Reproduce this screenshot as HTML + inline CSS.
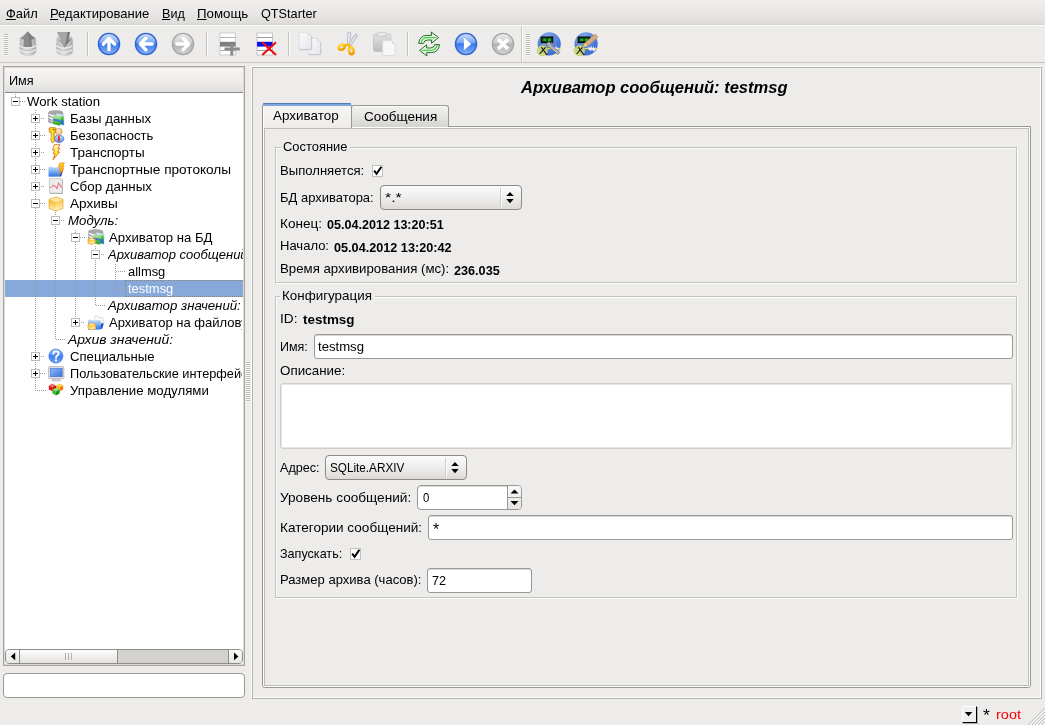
<!DOCTYPE html>
<html lang="ru"><head><meta charset="utf-8"><title>OpenSCADA</title>
<style>
html,body{margin:0;padding:0}
body{width:1045px;height:725px;overflow:hidden;position:relative;background:#edeceb;font-family:"Liberation Sans",sans-serif;font-size:13px;color:#000}
.a{position:absolute;box-sizing:border-box}
.t{position:absolute;white-space:pre;line-height:20px;height:20px;will-change:transform}
.t span{display:inline-block;transform-origin:0 50%}
.t u{text-decoration:underline;text-underline-offset:1px}
svg{position:absolute;overflow:visible}

</style></head>
<body>
<div class="a " style="left:0px;top:0px;width:1045px;height:25px;background:linear-gradient(#f0efee,#eceae9 40%,#e0dedc 90%,#d6d4d1)"></div>
<div class="a " style="left:0px;top:25px;width:1045px;height:1px;background:#fdfdfc"></div>
<div class="a " style="left:0px;top:62px;width:1045px;height:1px;background:#c8c6c3"></div>
<div class="a " style="left:4px;top:34px;width:4px;height:22px;background:repeating-linear-gradient(#b9b7b4 0,#b9b7b4 1px,#fdfdfd 1px,#fdfdfd 2px)"></div>
<div class="a " style="left:87px;top:32px;width:1px;height:24px;background:#c4c2bf"></div>
<div class="a " style="left:88px;top:32px;width:1px;height:24px;background:#fbfbfa"></div>
<div class="a " style="left:206px;top:32px;width:1px;height:24px;background:#c4c2bf"></div>
<div class="a " style="left:207px;top:32px;width:1px;height:24px;background:#fbfbfa"></div>
<div class="a " style="left:288px;top:32px;width:1px;height:24px;background:#c4c2bf"></div>
<div class="a " style="left:289px;top:32px;width:1px;height:24px;background:#fbfbfa"></div>
<div class="a " style="left:407px;top:32px;width:1px;height:24px;background:#c4c2bf"></div>
<div class="a " style="left:408px;top:32px;width:1px;height:24px;background:#fbfbfa"></div>
<div class="a " style="left:521px;top:26px;width:1px;height:36px;background:#cbc9c6"></div>
<div class="a " style="left:522px;top:26px;width:1px;height:36px;background:#fdfdfc"></div>
<div class="a " style="left:526px;top:34px;width:4px;height:22px;background:repeating-linear-gradient(#b9b7b4 0,#b9b7b4 1px,#fdfdfd 1px,#fdfdfd 2px)"></div>
<svg style="left:0;top:0" width="1045" height="70" viewBox="0 0 1045 70">
<defs>
<linearGradient id="gcyl" x1="0" x2="1" y1="0" y2="0"><stop offset="0" stop-color="#b9b9b9"/><stop offset=".45" stop-color="#e2e2e2"/><stop offset="1" stop-color="#a9a9a9"/></linearGradient>
<linearGradient id="gbl" x1="0" x2="0" y1="0" y2="1"><stop offset="0" stop-color="#cfdef9"/><stop offset=".42" stop-color="#7fa9f1"/><stop offset=".5" stop-color="#3677ef"/><stop offset="1" stop-color="#8fb6f6"/></linearGradient>
<linearGradient id="ggr" x1="0" x2="0" y1="0" y2="1"><stop offset="0" stop-color="#ebebeb"/><stop offset=".45" stop-color="#cdcdcd"/><stop offset=".5" stop-color="#b2b2b2"/><stop offset="1" stop-color="#d2d2d2"/></linearGradient>
<linearGradient id="gpg" x1="0" x2="1" y1="0" y2="1"><stop offset="0" stop-color="#fbfbfc"/><stop offset="1" stop-color="#e6e6ea"/></linearGradient>
<linearGradient id="gclip" x1="0" x2="0" y1="0" y2="1"><stop offset="0" stop-color="#e3e3e3"/><stop offset="1" stop-color="#bbbbbb"/></linearGradient>
<linearGradient id="gor" x1="0" x2="0" y1="0" y2="1"><stop offset="0" stop-color="#ffd83a"/><stop offset="1" stop-color="#f39a00"/></linearGradient>
<linearGradient id="ggn" x1="0" x2="1" y1="0" y2="0"><stop offset="0" stop-color="#d9f6d2"/><stop offset="1" stop-color="#35c535"/></linearGradient>
<linearGradient id="ggn2" x1="1" x2="0" y1="0" y2="0"><stop offset="0" stop-color="#d9f6d2"/><stop offset="1" stop-color="#35c535"/></linearGradient>
<radialGradient id="gsc" cx=".4" cy=".25" r=".9"><stop offset="0" stop-color="#8fb0ee"/><stop offset=".6" stop-color="#4a77da"/><stop offset="1" stop-color="#3a63c8"/></radialGradient>
</defs>
<!-- DB load (disabled) -->
<g>
<path d="M20.6 39.6 L20.6 52.6 A7.6 3.4 0 0 0 36.4 52.6 L36.4 39.6Z" fill="#bdbdbd" opacity=".55"/>
<path d="M19.8 38.6 L19.8 51.8 A7.9 3.5 0 0 0 35.6 51.8 L35.6 38.6 A7.9 3.2 0 0 0 19.8 38.6Z" fill="url(#gcyl)"/>
<path d="M19.8 43.4 A7.9 3.5 0 0 0 35.6 43.4 M19.8 47.6 A7.9 3.5 0 0 0 35.6 47.6" fill="none" stroke="#a9a9a9" stroke-width=".9"/>
<path d="M20.2 45.4 A7.9 3.5 0 0 0 35.2 45.4 M20.2 49.6 A7.9 3.5 0 0 0 35.2 49.6" fill="none" stroke="#e9e9e9" stroke-width="1.6"/>
<path d="M27.6 31.6 L34.8 38.8 L31.4 39.4 L31.8 46.4 Q27.7 47.6 23.4 46.4 L23.9 39.4 L20.6 38.8Z" fill="#8b8b8b"/>
<path d="M27.6 31.6 L34.8 38.8 L31.4 39.4 L31.8 46.4 L29.6 46.8 L29 38 Z" fill="#7f7f7f"/>
</g>
<!-- DB save (disabled) -->
<g>
<path d="M57.4 39.6 L57.4 52.6 A7.6 3.4 0 0 0 73.2 52.6 L73.2 39.6Z" fill="#bdbdbd" opacity=".55"/>
<path d="M56.6 38.6 L56.6 51.8 A7.9 3.5 0 0 0 72.4 51.8 L72.4 38.6 A7.9 3.2 0 0 0 56.6 38.6Z" fill="url(#gcyl)"/>
<path d="M56.6 43.4 A7.9 3.5 0 0 0 72.4 43.4 M56.6 47.6 A7.9 3.5 0 0 0 72.4 47.6" fill="none" stroke="#a9a9a9" stroke-width=".9"/>
<path d="M57 45.4 A7.9 3.5 0 0 0 72 45.4 M57 49.6 A7.9 3.5 0 0 0 72 49.6" fill="none" stroke="#e9e9e9" stroke-width="1.6"/>
<path d="M56.8 32 L70 32 L68.4 39.6 L70.6 39.4 L64.4 47.8 L58.4 39.4 L60.8 39.6Z" fill="#a5a5a5"/>
<path d="M70 32 L68.4 39.6 L70.6 39.4 L64.4 47.8 L66.4 40 L67.4 32Z" fill="#787878"/>
</g>
<!-- up -->
<g>
<circle cx="109" cy="44" r="10.6" fill="url(#gbl)" stroke="#2c63cf" stroke-width="1.3"/>
<path d="M103.4 44.2 L109 38.2 L114.6 44.2 M109 39.5 L109 49.8" fill="none" stroke="#fff" stroke-width="3.3" stroke-linecap="round" stroke-linejoin="round"/>
</g>
<!-- back -->
<g>
<circle cx="146" cy="44" r="10.6" fill="url(#gbl)" stroke="#2c63cf" stroke-width="1.3"/>
<path d="M146 38.2 L140.3 44 L146 49.8 M141.6 44 L152.2 44" fill="none" stroke="#fff" stroke-width="3.3" stroke-linecap="round" stroke-linejoin="round"/>
</g>
<!-- forward (disabled) -->
<g>
<circle cx="183" cy="44" r="10.6" fill="url(#ggr)" stroke="#a5a5a5" stroke-width="1.3"/>
<path d="M183 38.2 L188.7 44 L183 49.8 M187.4 44 L176.8 44" fill="none" stroke="#fff" stroke-width="3.3" stroke-linecap="round" stroke-linejoin="round"/>
</g>
<!-- add row -->
<g>
<rect x="220" y="33" width="15.5" height="22" fill="#fff" stroke="#c3c3c3" stroke-width=".8"/>
<path d="M220 37.5 H235.5 M220 50.5 H235.5" stroke="#b5b5b5" stroke-width="1"/>
<rect x="220" y="41.8" width="15.5" height="4.8" fill="#7f7f7f"/>
<path d="M224.5 49 H239.8 M231.8 43.5 V55.6" stroke="#8b8b8b" stroke-width="3"/>
</g>
<!-- del row -->
<g>
<rect x="257" y="33" width="15.5" height="22" fill="#fff" stroke="#b9b9b9" stroke-width=".8"/>
<path d="M257 37.5 H272.5 M257 50.5 H272.5" stroke="#9d9d9d" stroke-width="1"/>
<rect x="257" y="41.8" width="15.5" height="4.8" fill="#0a10e6"/>
<path d="M262.3 42.3 L276 55 M276 42.3 L262.3 55" stroke="#ee1111" stroke-width="2.2"/>
</g>
<!-- copy (disabled) -->
<g>
<path d="M308.6 38.4 H317.2 L320.4 41.8 V54.4 H308.6Z" fill="url(#gpg)" stroke="#dadade" stroke-width=".7"/>
<path d="M317.2 38.6 V41.8 H320.3Z" fill="#dcdce2"/>
<path d="M308.6 54.7 H320.6 M320.7 42 V54.6" stroke="#c6c6ce" stroke-width="1"/>
<path d="M299.3 32.6 H308 L311.3 36 V49.3 H299.3Z" fill="url(#gpg)" stroke="#dadade" stroke-width=".7"/>
<path d="M308 32.8 V36 H311.2Z" fill="#dcdce2"/>
<path d="M299.3 49.7 H311.6 M311.7 36.4 V49.6" stroke="#c6c6ce" stroke-width="1"/>
</g>
<!-- cut -->
<g>
<path d="M347.9 32.8 Q349.2 31.4 350.6 32.8 L350 45 L347.4 45.2Z" fill="#ececf4" stroke="#a3a3bf" stroke-width=".7"/>
<path d="M355.4 34.2 Q357.6 34 357.4 36 L350.2 46.6 L347.8 44.8Z" fill="#dfdfeb" stroke="#a3a3bf" stroke-width=".7"/>
<ellipse cx="341.6" cy="47.2" rx="3.2" ry="2.4" transform="rotate(-28 341.6 47.2)" fill="#e3e1dc" stroke="url(#gor)" stroke-width="2.6"/>
<ellipse cx="351.3" cy="50.8" rx="2.3" ry="3.5" transform="rotate(-12 351.3 50.8)" fill="#e3e1dc" stroke="url(#gor)" stroke-width="2.6"/>
<path d="M344.4 45.4 L348.8 44.6 L350.2 47.4" fill="none" stroke="#f8b914" stroke-width="2.4" stroke-linejoin="round"/>
</g>
<!-- paste (disabled) -->
<g>
<rect x="373.5" y="33.8" width="17.3" height="17.8" rx="2" fill="url(#gclip)" stroke="#b9b9b9" stroke-width=".6"/>
<path d="M376.8 36 Q376.8 32.2 381.8 32.2 Q386.8 32.2 386.8 36Z" fill="#ededed" stroke="#b9b9b9" stroke-width=".7"/>
<path d="M382.6 40.6 H391.6 L395 44 V55.5 H382.6Z" fill="#f7f7f7" stroke="#d6d6d6" stroke-width=".7"/><path d="M391.6 40.8 V44 H394.8Z" fill="#dedede"/>
</g>
<!-- refresh -->
<g stroke="#296c2e" stroke-width="1" stroke-linejoin="round">
<path d="M418.7 43.4 Q419.6 35.4 427 35.4 L431.6 35.4 L431.2 32 L438.6 37.6 L431.6 43.2 L431.6 40 L427.8 40 Q424.2 40 423.4 43.4Z" fill="#e3f6df"/>
<path d="M439.5 44.6 Q438.6 52.6 431.2 52.6 L426.6 52.6 L427 56 L419.6 50.4 L426.6 44.8 L426.6 48 L430.4 48 Q434 48 434.8 44.6Z" fill="#e3f6df"/>
</g>
<path d="M421.2 42.4 Q422.4 37.7 427.4 37.7 L435.4 37.7" fill="none" stroke="#4cd04c" stroke-width="1.3" stroke-linecap="round"/>
<path d="M437 45.6 Q435.8 50.3 430.8 50.3 L422.8 50.3" fill="none" stroke="#4cd04c" stroke-width="1.3" stroke-linecap="round"/>
<!-- play -->
<g>
<circle cx="466" cy="44" r="10.6" fill="url(#gbl)" stroke="#2c63cf" stroke-width="1.3"/>
<path d="M463.9 37.8 L471.3 44 L463.9 50.2Z" fill="#fff"/>
</g>
<!-- stop (disabled) -->
<g>
<circle cx="503" cy="44" r="10.6" fill="url(#ggr)" stroke="#a5a5a5" stroke-width="1.3"/>
<path d="M498.1 39.2 L507.9 49 M507.9 39.2 L498.1 49" stroke="#fdfdfd" stroke-width="3.7"/>
</g>
<!-- station tools -->
<g>
<circle cx="549.2" cy="43.9" r="11.6" fill="url(#gsc)"/>
<rect x="541.2" y="37" width="11.6" height="5.6" fill="#0c3d10" stroke="#000" stroke-width="1"/>
<path d="M543.2 39.8 H546.4 M547.8 39.8 H551" stroke="#25a825" stroke-width="2.6"/>
<path d="M547 48.6 H561" stroke="#e8e23a" stroke-width="1"/>
<path d="M552.5 48.6 L554 46.4 L555 48.2 L556.2 45.8 L557.2 48.4 L558.6 47 L558.4 50 L556.4 51.4 L555 49.6 L553.8 51 Z" fill="#f1f1f6"/>
<circle cx="542.5" cy="50.5" r="5.3" fill="#d0db74" fill-opacity=".88" stroke="#a9b752" stroke-width=".5"/>
<path d="M539.6 54 L545.4 47.4 M541.4 47.2 L547.2 55.2" stroke="#111" stroke-width="1.1"/>
<path d="M546.6 43.4 L549.2 41.6 L550.2 43.6 L552.2 42.2 L551.6 45.4 L559.8 52.2 L557.8 54.4 L549.6 47.6 L547.4 47Z" fill="#b4b4b4" stroke="#6e6e6e" stroke-width=".7"/>
</g>
<g>
<circle cx="586.1" cy="43.9" r="11.6" fill="url(#gsc)"/>
<rect x="578.2" y="37" width="11.6" height="5.6" fill="#0c3d10" stroke="#000" stroke-width="1"/>
<path d="M580.2 39.8 H583.4 M584.8 39.8 H588" stroke="#25a825" stroke-width="2.6"/>
<path d="M584 48.6 H598" stroke="#e8e23a" stroke-width="1"/>
<path d="M587.5 48.6 L589 46.4 L590 48.2 L591.2 45.8 L592.2 48.4 L593.6 46.6 L594.6 48.4 L595.8 47 L595.4 50 L593.4 51.4 L592 49.6 L590.8 51 Z" fill="#f1f1f6"/>
<circle cx="579.5" cy="50.5" r="5.3" fill="#d0db74" fill-opacity=".88" stroke="#a9b752" stroke-width=".5"/>
<path d="M576.6 54 L582.4 47.4 M578.4 47.2 L584.2 55.2" stroke="#111" stroke-width="1.1"/>
<path d="M583.2 46.8 L585 42.8 L595.2 34 L598 37.2 L587.2 46.2Z" fill="#d8aa7c" stroke="#b88a5e" stroke-width=".5"/>
<path d="M583.2 46.8 L585 42.8 L587.2 46.2Z" fill="#e6d77a"/>
</g>
</svg>

<div class="a " style="left:3px;top:66px;width:242px;height:600px;background:#fff;border:1px solid #a6a4a1"></div>
<div class="a " style="left:4px;top:67px;width:240px;height:598px;border:1px solid #dddbd9"></div>
<div class="a " style="left:5px;top:68px;width:238px;height:24px;background:linear-gradient(#f6f5f4,#edecea 60%,#e1dfdd)"></div>
<div class="a " style="left:5px;top:92px;width:238px;height:1px;background:#8c8a88"></div>
<div class="a " style="left:5px;top:280px;width:238px;height:17px;background:#86a9da"></div>
<div class="a " style="left:125px;top:280px;width:118px;height:17px;border:1px dotted #8f846c;border-right:none"></div>
<svg style="left:0;top:0" width="250" height="420" viewBox="0 0 250 420" shape-rendering="crispEdges">
<g>
<path d="M15.5 94 V97" stroke="#9c9c9c" stroke-width="1" stroke-dasharray="1 1" fill="none"/>
<path d="M35.5 110 V391" stroke="#9c9c9c" stroke-width="1" stroke-dasharray="1 1" fill="none"/>
<path d="M55.5 212 V339" stroke="#9c9c9c" stroke-width="1" stroke-dasharray="1 1" fill="none"/>
<path d="M75.5 230 V323" stroke="#9c9c9c" stroke-width="1" stroke-dasharray="1 1" fill="none"/>
<path d="M95.5 246 V305" stroke="#9c9c9c" stroke-width="1" stroke-dasharray="1 1" fill="none"/>
<path d="M115.5 264 V289" stroke="#9c9c9c" stroke-width="1" stroke-dasharray="1 1" fill="none"/>
<path d="M16 101.5 H25" stroke="#9c9c9c" stroke-width="1" stroke-dasharray="1 1" fill="none"/>
<path d="M37 118.5 H44" stroke="#9c9c9c" stroke-width="1" stroke-dasharray="1 1" fill="none"/>
<path d="M36 135.5 H45" stroke="#9c9c9c" stroke-width="1" stroke-dasharray="1 1" fill="none"/>
<path d="M37 152.5 H44" stroke="#9c9c9c" stroke-width="1" stroke-dasharray="1 1" fill="none"/>
<path d="M36 169.5 H45" stroke="#9c9c9c" stroke-width="1" stroke-dasharray="1 1" fill="none"/>
<path d="M37 186.5 H44" stroke="#9c9c9c" stroke-width="1" stroke-dasharray="1 1" fill="none"/>
<path d="M36 203.5 H45" stroke="#9c9c9c" stroke-width="1" stroke-dasharray="1 1" fill="none"/>
<path d="M57 220.5 H64" stroke="#9c9c9c" stroke-width="1" stroke-dasharray="1 1" fill="none"/>
<path d="M76 237.5 H85" stroke="#9c9c9c" stroke-width="1" stroke-dasharray="1 1" fill="none"/>
<path d="M97 254.5 H104" stroke="#9c9c9c" stroke-width="1" stroke-dasharray="1 1" fill="none"/>
<path d="M116 271.5 H125" stroke="#9c9c9c" stroke-width="1" stroke-dasharray="1 1" fill="none"/>
<path d="M117 288.5 H126" stroke="#9c9c9c" stroke-width="1" stroke-dasharray="1 1" fill="none"/>
<path d="M96 305.5 H105" stroke="#9c9c9c" stroke-width="1" stroke-dasharray="1 1" fill="none"/>
<path d="M77 322.5 H84" stroke="#9c9c9c" stroke-width="1" stroke-dasharray="1 1" fill="none"/>
<path d="M56 339.5 H65" stroke="#9c9c9c" stroke-width="1" stroke-dasharray="1 1" fill="none"/>
<path d="M37 356.5 H44" stroke="#9c9c9c" stroke-width="1" stroke-dasharray="1 1" fill="none"/>
<path d="M36 373.5 H45" stroke="#9c9c9c" stroke-width="1" stroke-dasharray="1 1" fill="none"/>
<path d="M37 390.5 H46" stroke="#9c9c9c" stroke-width="1" stroke-dasharray="1 1" fill="none"/>
</g>
<rect x="11.5" y="97.5" width="8" height="8" fill="#fff" stroke="#bdbbb9" stroke-width="1"/>
<rect x="13" y="101" width="5" height="1" fill="#000"/>
<rect x="31.5" y="114.5" width="8" height="8" fill="#fff" stroke="#bdbbb9" stroke-width="1"/>
<rect x="33" y="118" width="5" height="1" fill="#000"/>
<rect x="35" y="116" width="1" height="5" fill="#000"/>
<rect x="31.5" y="131.5" width="8" height="8" fill="#fff" stroke="#bdbbb9" stroke-width="1"/>
<rect x="33" y="135" width="5" height="1" fill="#000"/>
<rect x="35" y="133" width="1" height="5" fill="#000"/>
<rect x="31.5" y="148.5" width="8" height="8" fill="#fff" stroke="#bdbbb9" stroke-width="1"/>
<rect x="33" y="152" width="5" height="1" fill="#000"/>
<rect x="35" y="150" width="1" height="5" fill="#000"/>
<rect x="31.5" y="165.5" width="8" height="8" fill="#fff" stroke="#bdbbb9" stroke-width="1"/>
<rect x="33" y="169" width="5" height="1" fill="#000"/>
<rect x="35" y="167" width="1" height="5" fill="#000"/>
<rect x="31.5" y="182.5" width="8" height="8" fill="#fff" stroke="#bdbbb9" stroke-width="1"/>
<rect x="33" y="186" width="5" height="1" fill="#000"/>
<rect x="35" y="184" width="1" height="5" fill="#000"/>
<rect x="31.5" y="199.5" width="8" height="8" fill="#fff" stroke="#bdbbb9" stroke-width="1"/>
<rect x="33" y="203" width="5" height="1" fill="#000"/>
<rect x="51.5" y="216.5" width="8" height="8" fill="#fff" stroke="#bdbbb9" stroke-width="1"/>
<rect x="53" y="220" width="5" height="1" fill="#000"/>
<rect x="71.5" y="233.5" width="8" height="8" fill="#fff" stroke="#bdbbb9" stroke-width="1"/>
<rect x="73" y="237" width="5" height="1" fill="#000"/>
<rect x="91.5" y="250.5" width="8" height="8" fill="#fff" stroke="#bdbbb9" stroke-width="1"/>
<rect x="93" y="254" width="5" height="1" fill="#000"/>
<rect x="71.5" y="318.5" width="8" height="8" fill="#fff" stroke="#bdbbb9" stroke-width="1"/>
<rect x="73" y="322" width="5" height="1" fill="#000"/>
<rect x="75" y="320" width="1" height="5" fill="#000"/>
<rect x="31.5" y="352.5" width="8" height="8" fill="#fff" stroke="#bdbbb9" stroke-width="1"/>
<rect x="33" y="356" width="5" height="1" fill="#000"/>
<rect x="35" y="354" width="1" height="5" fill="#000"/>
<rect x="31.5" y="369.5" width="8" height="8" fill="#fff" stroke="#bdbbb9" stroke-width="1"/>
<rect x="33" y="373" width="5" height="1" fill="#000"/>
<rect x="35" y="371" width="1" height="5" fill="#000"/>
</svg>
<svg style="left:0;top:0" width="250" height="420" viewBox="0 0 250 420">
<defs>
<linearGradient id="tcyl" x1="0" x2="1" y1="0" y2="0"><stop offset="0" stop-color="#a9a9a9"/><stop offset=".4" stop-color="#e9e9e9"/><stop offset="1" stop-color="#9a9a9a"/></linearGradient>
<linearGradient id="tgrn" x1="0" x2="0" y1="0" y2="1"><stop offset="0" stop-color="#a9e690"/><stop offset=".5" stop-color="#4fc040"/><stop offset="1" stop-color="#2c9a28"/></linearGradient>
<linearGradient id="tteal" x1="0" x2="0" y1="0" y2="1"><stop offset="0" stop-color="#eaf6fb"/><stop offset=".18" stop-color="#cfe9f2"/><stop offset=".3" stop-color="#66cc55"/><stop offset=".55" stop-color="#3fae4a"/><stop offset=".62" stop-color="#2a83b4"/><stop offset="1" stop-color="#1f6aa6"/></linearGradient>
<linearGradient id="tkey" x1="0" x2="1" y1="0" y2="0"><stop offset="0" stop-color="#e8a800"/><stop offset=".5" stop-color="#ffe82a"/><stop offset="1" stop-color="#e09a00"/></linearGradient>
<radialGradient id="tskin" cx=".4" cy=".35" r=".7"><stop offset="0" stop-color="#fdeccd"/><stop offset="1" stop-color="#e9b36f"/></radialGradient>
<radialGradient id="tbody" cx=".5" cy=".3" r=".8"><stop offset="0" stop-color="#d6e6fb"/><stop offset="1" stop-color="#3f7fe6"/></radialGradient>
<linearGradient id="tbolt" x1="0" x2="0" y1="0" y2="1"><stop offset="0" stop-color="#fffbd8"/><stop offset=".5" stop-color="#fff23a"/><stop offset="1" stop-color="#ffb300"/></linearGradient>
<linearGradient id="tbolt2" x1="0" x2="0" y1="0" y2="1"><stop offset="0" stop-color="#ffd21e"/><stop offset="1" stop-color="#ff8a00"/></linearGradient>
<linearGradient id="tfold" x1="0" x2="0" y1="0" y2="1"><stop offset="0" stop-color="#c9e1fc"/><stop offset=".45" stop-color="#7fb3f4"/><stop offset="1" stop-color="#2a6ee0"/></linearGradient>
<linearGradient id="tboxl" x1="0" x2="0" y1="0" y2="1"><stop offset="0" stop-color="#fbb21a"/><stop offset="1" stop-color="#fff2b8"/></linearGradient>
<linearGradient id="tboxr" x1="0" x2="0" y1="0" y2="1"><stop offset="0" stop-color="#fcc341"/><stop offset="1" stop-color="#fff7cf"/></linearGradient>
<linearGradient id="tq" x1="0" x2="0" y1="0" y2="1"><stop offset="0" stop-color="#a9c7fa"/><stop offset=".5" stop-color="#3f7ff1"/><stop offset="1" stop-color="#6fa2f6"/></linearGradient>
<linearGradient id="tscr" x1="0" x2="1" y1="0" y2="1"><stop offset="0" stop-color="#8fbcf8"/><stop offset="1" stop-color="#3a72da"/></linearGradient>
</defs>
<g transform="translate(48 110)">
<path d="M.2 2.8 Q.2 .2 7.6 .2 Q15.2 .2 15.2 2.8 L15.2 11.4 Q15.2 13.6 7.6 13.6 Q.2 13.6 .2 11.4Z" fill="url(#tcyl)"/>
<ellipse cx="7.7" cy="2.7" rx="7.4" ry="2.4" fill="#a7a7a7"/>
<path d="M.4 5.4 Q3 7.4 7 7.4 M.4 8.4 Q3 10.4 7 10.4 M.4 11.2 Q3 13 7 13" stroke="#8c8c8c" stroke-width=".8" fill="none"/>
<path d="M1 4.2 Q3 5.6 5.6 5.9 M1 7.2 Q3 8.6 5.6 8.9" stroke="#fafafa" stroke-width="1.1" fill="none"/>
<path d="M8.2 3.4 L16 5.2 L16 15.2 L10.6 14Z" fill="url(#tteal)" stroke="#9fcbe3" stroke-width=".5"/>
<path d="M6.4 5.2 L13 6.6 L13 9 L6.4 7.8Z" fill="#9fe08a"/>
<path d="M5 7 L12.4 8.6 L12.2 15.8 L5 14Z" fill="url(#tgrn)"/>
<path d="M5.2 8.4 L12.3 10 L12.3 12 L5.2 10.4Z" fill="#4a74dc"/>
</g>
<g transform="translate(48 127)">
<ellipse cx="11" cy="11.8" rx="5" ry="3.9" fill="url(#tbody)" stroke="#3568d0" stroke-width=".5"/>
<path d="M10.2 8.6 L11.6 8.6 L12 13.4 L10.9 14.6 L9.8 13.4Z" fill="#e02020"/>
<circle cx="10.8" cy="4.6" r="3.5" fill="url(#tskin)" stroke="#c98f55" stroke-width=".5"/>
<path d="M1 1.6 Q1 .5 2.4 .5 L6.6 .5 Q7.8 .5 7.8 1.8 L7.6 4.8 Q7.4 6 6.4 6.2 L6.4 14.4 L5 15.9 L3.2 14.8 L3.2 13.4 L2.4 12.6 L3.2 11.6 L3.2 6.2 Q1.4 5.8 1.2 4.4Z" fill="url(#tkey)" stroke="#b86a1a" stroke-width=".6"/>
<ellipse cx="5.4" cy="2.4" rx=".9" ry=".6" fill="#7a4a10"/>
</g>
<g transform="translate(48 144) scale(1.0)">
<path d="M6.4 .6 L12 .6 L9.8 4.4 L11.8 4.4 L9.6 8 L11.6 8 L5 15.8 L7 9.6 L5.4 9.6 L6.6 5.8 L4.4 5.8Z" fill="url(#tbolt)" stroke="#d8641e" stroke-width=".8" stroke-linejoin="round"/>
</g>
<g transform="translate(48 161)">
<path d="M.4 6.6 Q.4 5.4 1.4 5.4 L4 5.4 L5 6.4 L12.4 6 L13.4 6 L13.4 13 L12.4 15.4 L1.6 15.8 Q.6 15.8 .6 14.6Z" fill="url(#tfold)"/>
<path d="M12.6 9 L15 9 L13.4 15.2 L11.6 15.6Z" fill="#1b55c4"/>
</g>
<g transform="translate(54.8 162.4) scale(0.8)">
<path d="M6.4 .6 L12 .6 L9.8 4.4 L11.8 4.4 L9.6 8 L11.6 8 L5 15.8 L7 9.6 L5.4 9.6 L6.6 5.8 L4.4 5.8Z" fill="url(#tbolt2)" stroke="#f08a1a" stroke-width=".8" stroke-linejoin="round"/>
</g>
<g transform="translate(48 178)">
<rect x="1.6" y="1" width="13.4" height="15" rx="1" fill="#9f9f9f"/>
<rect x="1.4" y=".6" width="13" height="14.6" rx="1" fill="#ececec" stroke="#b7b7b7" stroke-width=".6"/>
<path d="M2.2 9.8 L3.8 9.2 L5.2 6.8 L6.4 8.6 L7.4 7.8 L8.8 11 L10.6 4.8 L11.6 7.6 L12.4 6.8 L13.6 10" fill="none" stroke="#e4485c" stroke-width="1" stroke-opacity=".75"/>
</g>
<g transform="translate(48 195)">
<path d="M8.0 1.8 L15 4.498 L15 13.302 L8.0 16.0 L1 13.302 L1 4.498Z" fill="#fbb21a"/>
<path d="M1 4.498 L8.0 7.196 L8.0 16.0 L1 13.302Z" fill="url(#tboxl)"/>
<path d="M15 4.498 L8.0 7.196 L8.0 16.0 L15 13.302Z" fill="url(#tboxr)"/>
<path d="M8.0 1.8 L15 4.498 L8.0 7.196 L1 4.498Z" fill="#fde6a0"/>
<path d="M8.0 1.8 L15 4.498 L15 13.302 L8.0 16.0 L1 13.302 L1 4.498Z" fill="none" stroke="#dc9a2c" stroke-width=".6"/>
</g>
<g transform="translate(88 229)">
<path d="M.2 2.8 Q.2 .2 7.6 .2 Q15.2 .2 15.2 2.8 L15.2 11.4 Q15.2 13.6 7.6 13.6 Q.2 13.6 .2 11.4Z" fill="url(#tcyl)"/>
<ellipse cx="7.7" cy="2.7" rx="7.4" ry="2.4" fill="#a7a7a7"/>
<path d="M.4 5.4 Q3 7.4 7 7.4 M.4 8.4 Q3 10.4 7 10.4 M.4 11.2 Q3 13 7 13" stroke="#8c8c8c" stroke-width=".8" fill="none"/>
<path d="M1 4.2 Q3 5.6 5.6 5.9 M1 7.2 Q3 8.6 5.6 8.9" stroke="#fafafa" stroke-width="1.1" fill="none"/>
<path d="M8.2 3.4 L16 5.2 L16 15.2 L10.6 14Z" fill="url(#tteal)" stroke="#9fcbe3" stroke-width=".5"/>
<path d="M6.4 5.2 L13 6.6 L13 9 L6.4 7.8Z" fill="#9fe08a"/>
<path d="M5 7 L12.4 8.6 L12.2 15.8 L5 14Z" fill="url(#tgrn)"/>
<path d="M5.2 8.4 L12.3 10 L12.3 12 L5.2 10.4Z" fill="#4a74dc"/>
<path d="M3.6 9 L7.2 10.254 L7.2 14.346 L3.6 15.6 L0 14.346 L0 10.254Z" fill="#fbb21a"/>
<path d="M0 10.254 L3.6 11.508 L3.6 15.6 L0 14.346Z" fill="url(#tboxl)"/>
<path d="M7.2 10.254 L3.6 11.508 L3.6 15.6 L7.2 14.346Z" fill="url(#tboxr)"/>
<path d="M3.6 9 L7.2 10.254 L3.6 11.508 L0 10.254Z" fill="#fde6a0"/>
<path d="M3.6 9 L7.2 10.254 L7.2 14.346 L3.6 15.6 L0 14.346 L0 10.254Z" fill="none" stroke="#dc9a2c" stroke-width=".6"/>
</g>
<g transform="translate(88 314)">
<path d="M6.4 4.6 L7.2 2 L10 2.4 L10.4 3.2 L14.8 3.8 Q15.8 4.2 15.6 5.6 L15 9 L6 8Z" fill="#fbfbfb" stroke="#b9b9b9" stroke-width=".5"/>
<path d="M0 6.6 Q0 5.6 1 5.6 L3.2 5.6 L4.2 6.4 L11.4 6 L12.6 6.4 L13 13.4 L12 15.6 L1 15.8 Q0 15.8 0 14.8Z" fill="url(#tfold)"/>
<path d="M13 9.4 L15.8 9.2 L14.4 14.6 L12.4 15.4Z" fill="#1b55c4"/>
<path d="M3.8 9 L7.6 10.33 L7.6 14.67 L3.8 16 L0 14.67 L0 10.33Z" fill="#fbb21a"/>
<path d="M0 10.33 L3.8 11.66 L3.8 16 L0 14.67Z" fill="url(#tboxl)"/>
<path d="M7.6 10.33 L3.8 11.66 L3.8 16 L7.6 14.67Z" fill="url(#tboxr)"/>
<path d="M3.8 9 L7.6 10.33 L3.8 11.66 L0 10.33Z" fill="#fde6a0"/>
<path d="M3.8 9 L7.6 10.33 L7.6 14.67 L3.8 16 L0 14.67 L0 10.33Z" fill="none" stroke="#dc9a2c" stroke-width=".6"/>
</g>
<g transform="translate(48 348)">
<circle cx="7.9" cy="8.1" r="7" fill="url(#tq)" stroke="#3a78ee" stroke-width=".8"/>
<path d="M5.4 5.8 Q5.4 3.4 8 3.4 Q10.6 3.4 10.6 5.6 Q10.6 7 9 7.8 Q8 8.4 8 9.8" fill="none" stroke="#fff" stroke-width="1.9" stroke-linecap="round"/>
<circle cx="8" cy="12.4" r="1.15" fill="#fff"/>
</g>
<g transform="translate(48 365)">
<rect x=".6" y="1.6" width="15.2" height="12.2" rx="1.2" fill="#ebebeb" stroke="#a2a2a2" stroke-width=".7"/>
<rect x="2.2" y="3.2" width="12" height="8.6" fill="url(#tscr)" stroke="#2f5fc0" stroke-width=".5"/>
<path d="M5 13.8 L11.6 13.8 L12.4 16 L4.2 16Z" fill="#d9d9d9" stroke="#9c9c9c" stroke-width=".5"/>
</g>
<g transform="translate(48 382)">
<path d="M4.4 1.6 L8.0 3.4000000000000004 L4.4 5.2 L0.8000000000000003 3.4000000000000004Z" fill="#f46a6a"/>
<path d="M0.8000000000000003 3.4000000000000004 L4.4 5.2 L4.4 9.2 L0.8000000000000003 7.4Z" fill="#e81616"/>
<path d="M8.0 3.4000000000000004 L4.4 5.2 L4.4 9.2 L8.0 7.4Z" fill="#b90d0d"/>
<path d="M11.6 1.6 L15.2 3.4000000000000004 L11.6 5.2 L8.0 3.4000000000000004Z" fill="#ffd23a"/>
<path d="M8.0 3.4000000000000004 L11.6 5.2 L11.6 9.2 L8.0 7.4Z" fill="#ffae10"/>
<path d="M15.2 3.4000000000000004 L11.6 5.2 L11.6 9.2 L15.2 7.4Z" fill="#f07a08"/>
<path d="M8 5.800000000000001 L11.6 7.6000000000000005 L8 9.4 L4.4 7.6000000000000005Z" fill="#8de06a"/>
<path d="M4.4 7.6000000000000005 L8 9.4 L8 13.4 L4.4 11.600000000000001Z" fill="#35c22a"/>
<path d="M11.6 7.6000000000000005 L8 9.4 L8 13.4 L11.6 11.600000000000001Z" fill="#1f8f1c"/>
</g>
</svg>

<div class="a " style="left:5px;top:649px;width:238px;height:15px;background:#d4d2cf;border:1px solid #8f8d8a;border-radius:4px"></div>
<div class="a " style="left:6px;top:650px;width:13px;height:13px;background:linear-gradient(#fcfcfc,#e6e5e3);border-radius:3px 0 0 3px"></div>
<div class="a " style="left:19px;top:650px;width:1px;height:13px;background:#8f8d8a"></div>
<div class="a " style="left:20px;top:650px;width:98px;height:13px;background:linear-gradient(#fdfdfd,#f0efee 50%,#e3e2e0)"></div>
<div class="a " style="left:117px;top:650px;width:1px;height:13px;background:#8f8d8a"></div>
<div class="a " style="left:228px;top:650px;width:1px;height:13px;background:#8f8d8a"></div>
<div class="a " style="left:229px;top:650px;width:13px;height:13px;background:linear-gradient(#fcfcfc,#e6e5e3);border-radius:0 3px 3px 0"></div>
<div class="a " style="left:65px;top:653px;width:1px;height:7px;background:#b3b1ae"></div>
<div class="a " style="left:68px;top:653px;width:1px;height:7px;background:#b3b1ae"></div>
<div class="a " style="left:71px;top:653px;width:1px;height:7px;background:#b3b1ae"></div>
<svg style="left:0;top:0" width="1045" height="725"><path d="M15.2 652.6 L10.8 656.4 L15.2 660.2Z M234 652.6 L238.4 656.4 L234 660.2Z" fill="#000"/></svg>
<div class="a " style="left:3px;top:673px;width:242px;height:25px;background:#fff;border:1px solid #9a9895;border-radius:4px"></div>
<div class="a " style="left:246px;top:362px;width:4px;height:40px;background:repeating-linear-gradient(#b9b7b4 0,#b9b7b4 1px,#fdfdfd 1px,#fdfdfd 2px)"></div>
<div class="a " style="left:251px;top:66px;width:790px;height:632px;border:1px solid #fdfdfc"></div>
<div class="a " style="left:252px;top:67px;width:790px;height:632px;border:1px solid #b5b3b0"></div>
<div class="a " style="left:262px;top:126px;width:769px;height:562px;border:1px solid #9a9896;border-radius:0 0 3px 3px"></div>
<div class="a " style="left:263px;top:127px;width:767px;height:560px;border:1px solid #fdfdfc;border-radius:0 0 2px 2px"></div>
<div class="a " style="left:264px;top:128px;width:765px;height:558px;border:1px solid #bdbbb8"></div>
<div class="a " style="left:351px;top:105px;width:98px;height:22px;background:linear-gradient(#f3f2f1,#e6e4e2 50%,#d6d4d1);border:1px solid #9a9896;border-bottom:none;border-radius:3px 3px 0 0;box-shadow:inset 0 1px 0 #fbfbfa"></div>
<div class="a " style="left:262px;top:103px;width:90px;height:25px;background:linear-gradient(#f7f6f5,#edeceb);border:1px solid #9a9896;border-bottom:none;border-radius:4px 4px 0 0;box-shadow:inset 1px 0 0 #fdfdfc"></div>
<div class="a " style="left:263px;top:103px;width:88px;height:1px;background:#4f7cb8;border-radius:3px 3px 0 0"></div>
<div class="a " style="left:263px;top:104px;width:88px;height:2px;background:#7ea6dd"></div>
<div class="a " style="left:263px;top:126px;width:88px;height:2px;background:#edeceb"></div>
<div class="a " style="left:263px;top:126px;width:1px;height:2px;background:#fdfdfc"></div>
<div class="a " style="left:276px;top:148px;width:742px;height:136px;border:1px solid #fdfdfc"></div>
<div class="a " style="left:275px;top:147px;width:742px;height:136px;border:1px solid #c4c2bf"></div>
<div class="a " style="left:280.7px;top:145px;width:69.69999999999999px;height:5px;background:#edeceb"></div>
<div class="a " style="left:276px;top:297px;width:742px;height:302px;border:1px solid #fdfdfc"></div>
<div class="a " style="left:275px;top:296px;width:742px;height:302px;border:1px solid #c4c2bf"></div>
<div class="a " style="left:280px;top:294px;width:95.19999999999999px;height:5px;background:#edeceb"></div>
<div class="a " style="left:372px;top:164.5px;width:11px;height:12px;background:#fff;border:1px solid #c2c0bd"></div>
<svg style="left:372px;top:164.5px" width="12" height="12"><path d="M2.2 5.6 L4.6 8.8 L9.4 1.8" fill="none" stroke="#000" stroke-width="2"/></svg>
<div class="a " style="left:380px;top:185px;width:142px;height:25px;background:linear-gradient(#fbfbfb,#eeedec 50%,#dddbd9);border:1px solid #8d8b88;border-radius:4px"></div>
<div class="a " style="left:500px;top:188px;width:1px;height:19px;background:#cfcdca"></div>
<div class="a " style="left:501px;top:188px;width:1px;height:19px;background:#fdfdfd"></div>
<svg style="left:0;top:0" width="1045" height="725"><path d="M506.3 196.1 L510 191.9 L513.7 196.1Z M506.3 199.1 L510 203.3 L513.7 199.1Z" fill="#000"/></svg>
<div class="a " style="left:314px;top:334px;width:699px;height:25px;background:#fff;border:1px solid #9a9895;border-radius:3px;box-shadow:inset 0 1px 0 #d9d8d6"></div>
<div class="a " style="left:280px;top:383px;width:733px;height:66px;background:#fff;border:1px solid #d0cecb;border-radius:3px;box-shadow:inset 0 0 0 1px #e6e5e3"></div>
<div class="a " style="left:325px;top:455px;width:142px;height:25px;background:linear-gradient(#fbfbfb,#eeedec 50%,#dddbd9);border:1px solid #8d8b88;border-radius:4px"></div>
<div class="a " style="left:445px;top:458px;width:1px;height:19px;background:#cfcdca"></div>
<div class="a " style="left:446px;top:458px;width:1px;height:19px;background:#fdfdfd"></div>
<svg style="left:0;top:0" width="1045" height="725"><path d="M451.3 466.1 L455 461.9 L458.7 466.1Z M451.3 469.1 L455 473.3 L458.7 469.1Z" fill="#000"/></svg>
<div class="a " style="left:417px;top:485px;width:105px;height:25px;background:#fff;border:1px solid #9a9895;border-radius:4px;box-shadow:inset 0 1px 0 #d9d8d6"></div>
<div class="a " style="left:507px;top:486px;width:14px;height:23px;background:linear-gradient(#fbfbfb,#e4e3e1);border-left:1px solid #9a9895;border-radius:0 3px 3px 0"></div>
<div class="a " style="left:508px;top:497px;width:13px;height:1px;background:#9a9895"></div>
<svg style="left:0;top:0" width="1045" height="725"><path d="M510.5 493.6 L514.5 489.4 L518.5 493.6Z M510.5 501 L514.5 505.2 L518.5 501Z" fill="#000"/></svg>
<div class="a " style="left:428px;top:515px;width:585px;height:25px;background:#fff;border:1px solid #9a9895;border-radius:3px;box-shadow:inset 0 1px 0 #d9d8d6"></div>
<div class="a " style="left:350px;top:548px;width:11px;height:12px;background:#fff;border:1px solid #c2c0bd"></div>
<svg style="left:350px;top:548px" width="12" height="12"><path d="M2.2 5.6 L4.6 8.8 L9.4 1.8" fill="none" stroke="#000" stroke-width="2"/></svg>
<div class="a " style="left:427px;top:568px;width:105px;height:25px;background:#fff;border:1px solid #9a9895;border-radius:3px;box-shadow:inset 0 1px 0 #d9d8d6"></div>
<div class="a " style="left:962px;top:706px;width:15px;height:17px;background:#efefef;border-top:1px solid #fff;border-left:1px solid #fff;border-right:1px solid #000;border-bottom:1px solid #000;box-shadow:1px 1px 0 rgba(0,0,0,.25)"></div>
<svg style="left:0;top:0" width="1045" height="725"><path d="M964.8 711.9 L972.3 711.9 L968.55 716.3Z" fill="#000"/></svg>
<svg style="left:1027px;top:707px" width="18" height="18"><path d="M1.5 18 L18 1.5" stroke="#b9b7b4" stroke-width="1.1"/><path d="M2.7 18 L18 2.7" stroke="#fdfdfc" stroke-width="1.1"/><path d="M4.8 18 L18 4.8" stroke="#b9b7b4" stroke-width="1.1"/><path d="M6.0 18 L18 6.0" stroke="#fdfdfc" stroke-width="1.1"/><path d="M8.1 18 L18 8.1" stroke="#b9b7b4" stroke-width="1.1"/><path d="M9.299999999999999 18 L18 9.299999999999999" stroke="#fdfdfc" stroke-width="1.1"/><path d="M11.399999999999999 18 L18 11.399999999999999" stroke="#b9b7b4" stroke-width="1.1"/><path d="M12.599999999999998 18 L18 12.599999999999998" stroke="#fdfdfc" stroke-width="1.1"/><path d="M14.7 18 L18 14.7" stroke="#b9b7b4" stroke-width="1.1"/><path d="M15.899999999999999 18 L18 15.899999999999999" stroke="#fdfdfc" stroke-width="1.1"/></svg>
<div class="t" style="left:5.6px;top:4px;font-size:13px;color:#000;"><span id="t0" style="transform:scaleX(0.9916);"><u>Ф</u>айл</span></div>
<div class="t" style="left:49.8px;top:4px;font-size:13px;color:#000;"><span id="t1" style="transform:scaleX(1.0015);"><u>Р</u>едактирование</span></div>
<div class="t" style="left:161.9px;top:4px;font-size:13px;color:#000;"><span id="t2" style="transform:scaleX(0.9689);"><u>В</u>ид</span></div>
<div class="t" style="left:196.6px;top:4px;font-size:13px;color:#000;"><span id="t3" style="transform:scaleX(1.0215);"><u>П</u>омощь</span></div>
<div class="t" style="left:260.7px;top:4px;font-size:13px;color:#000;"><span id="t4" style="transform:scaleX(0.9759);">QTStarter</span></div>
<div class="t" style="left:8.8px;top:71px;font-size:13px;color:#000;"><span id="t5" style="transform:scaleX(0.9752);">Имя</span></div>
<div class="t" style="left:27.0px;top:92px;font-size:13px;color:#000;"><span id="t6" style="transform:scaleX(1.0137);">Work station</span></div>
<div class="t" style="left:69.6px;top:109px;font-size:13px;color:#000;"><span id="t7" style="transform:scaleX(1.0193);">Базы данных</span></div>
<div class="t" style="left:69.6px;top:126px;font-size:13px;color:#000;"><span id="t8" style="transform:scaleX(1.0032);">Безопасность</span></div>
<div class="t" style="left:69.6px;top:143px;font-size:13px;color:#000;"><span id="t9" style="transform:scaleX(1.0379);">Транспорты</span></div>
<div class="t" style="left:69.6px;top:160px;font-size:13px;color:#000;"><span id="t10" style="transform:scaleX(1.0472);">Транспортные протоколы</span></div>
<div class="t" style="left:69.6px;top:177px;font-size:13px;color:#000;"><span id="t11" style="transform:scaleX(1.0246);">Сбор данных</span></div>
<div class="t" style="left:69.6px;top:194px;font-size:13px;color:#000;"><span id="t12" style="transform:scaleX(1.0441);">Архивы</span></div>
<div class="t" style="left:67.8px;top:211px;font-size:13px;color:#000;font-style:italic;"><span id="t13" style="transform:scaleX(1.0196);">Модуль:</span></div>
<div class="t" style="left:109.3px;top:228px;font-size:13px;color:#000;"><span id="t14" style="transform:scaleX(1.0101);">Архиватор на БД</span></div>
<div class="t" style="left:107.8px;top:245px;font-size:13px;color:#000;font-style:italic;width:135.2px;overflow:hidden;"><span id="t15" style="transform:scaleX(0.9980);">Архиватор сообщений:</span></div>
<div class="t" style="left:127.7px;top:262px;font-size:13px;color:#000;"><span id="t16" style="transform:scaleX(0.9926);">allmsg</span></div>
<div class="t" style="left:127.7px;top:279px;font-size:13px;color:#fff;"><span id="t17" style="transform:scaleX(0.9953);">testmsg</span></div>
<div class="t" style="left:107.8px;top:296px;font-size:13px;color:#000;font-style:italic;"><span id="t18" style="transform:scaleX(1.0181);">Архиватор значений:</span></div>
<div class="t" style="left:109.3px;top:313px;font-size:13px;color:#000;width:132.6px;overflow:hidden;"><span id="t19" style="transform:scaleX(1.0028);">Архиватор на файловую систему</span></div>
<div class="t" style="left:67.8px;top:330px;font-size:13px;color:#000;font-style:italic;"><span id="t20" style="transform:scaleX(1.0697);">Архив значений:</span></div>
<div class="t" style="left:69.6px;top:347px;font-size:13px;color:#000;"><span id="t21" style="transform:scaleX(1.0093);">Специальные</span></div>
<div class="t" style="left:69.6px;top:364px;font-size:13px;color:#000;width:172.2px;overflow:hidden;"><span id="t22" style="transform:scaleX(0.9800);">Пользовательские интерфейсы</span></div>
<div class="t" style="left:69.6px;top:381px;font-size:13px;color:#000;"><span id="t23" style="transform:scaleX(1.0177);">Управление модулями</span></div>
<div class="t" style="left:521.0px;top:78px;font-size:16px;color:#000;font-weight:700;font-style:italic;"><span id="t24" style="transform:scaleX(1.0325);">Архиватор сообщений: testmsg</span></div>
<div class="t" style="left:273.3px;top:106px;font-size:13px;color:#000;"><span id="t25" style="transform:scaleX(1.0346);">Архиватор</span></div>
<div class="t" style="left:363.8px;top:107px;font-size:13px;color:#000;"><span id="t26" style="transform:scaleX(1.0374);">Сообщения</span></div>
<div class="t" style="left:283.0px;top:137px;font-size:13px;color:#000;"><span id="t27" style="transform:scaleX(0.9927);">Состояние</span></div>
<div class="t" style="left:282.3px;top:286px;font-size:13px;color:#000;"><span id="t28" style="transform:scaleX(1.0304);">Конфигурация</span></div>
<div class="t" style="left:279.8px;top:161px;font-size:13px;color:#000;"><span id="t29" style="transform:scaleX(1.0076);">Выполняется:</span></div>
<div class="t" style="left:279.8px;top:188px;font-size:13px;color:#000;"><span id="t30" style="transform:scaleX(0.9985);">БД архиватора:</span></div>
<div class="t" style="left:384.8px;top:188px;font-size:13px;color:#000;"><span id="t31" style="transform:scaleX(1.2159);">*.*</span></div>
<div class="t" style="left:279.8px;top:214px;font-size:13px;color:#000;"><span id="t32" style="transform:scaleX(1.0427);">Конец:</span></div>
<div class="t" style="left:327.1px;top:215px;font-size:13px;color:#000;font-weight:700;"><span id="t33" style="transform:scaleX(0.9667);">05.04.2012 13:20:51</span></div>
<div class="t" style="left:279.8px;top:236px;font-size:13px;color:#000;"><span id="t34" style="transform:scaleX(1.0016);">Начало:</span></div>
<div class="t" style="left:334.1px;top:238px;font-size:13px;color:#000;font-weight:700;"><span id="t35" style="transform:scaleX(0.9733);">05.04.2012 13:20:42</span></div>
<div class="t" style="left:279.8px;top:259px;font-size:13px;color:#000;"><span id="t36" style="transform:scaleX(1.0179);">Время архивирования (мс):</span></div>
<div class="t" style="left:454.3px;top:261px;font-size:13px;color:#000;font-weight:700;"><span id="t37" style="transform:scaleX(0.9723);">236.035</span></div>
<div class="t" style="left:279.8px;top:309px;font-size:13px;color:#000;"><span id="t38" style="transform:scaleX(1.0526);">ID:</span></div>
<div class="t" style="left:302.5px;top:310px;font-size:13px;color:#000;font-weight:700;"><span id="t39" style="transform:scaleX(1.0329);">testmsg</span></div>
<div class="t" style="left:279.8px;top:337px;font-size:13px;color:#000;"><span id="t40" style="transform:scaleX(0.9607);">Имя:</span></div>
<div class="t" style="left:318.0px;top:337px;font-size:13px;color:#000;"><span id="t41" style="transform:scaleX(1.0106);">testmsg</span></div>
<div class="t" style="left:279.8px;top:361px;font-size:13px;color:#000;"><span id="t42" style="transform:scaleX(1.0278);">Описание:</span></div>
<div class="t" style="left:279.8px;top:458px;font-size:13px;color:#000;"><span id="t43" style="transform:scaleX(0.9675);">Адрес:</span></div>
<div class="t" style="left:330.2px;top:458px;font-size:13px;color:#000;"><span id="t44" style="transform:scaleX(0.9020);">SQLite.ARXIV</span></div>
<div class="t" style="left:279.8px;top:488px;font-size:13px;color:#000;"><span id="t45" style="transform:scaleX(1.0467);">Уровень сообщений:</span></div>
<div class="t" style="left:423.3px;top:488px;font-size:13px;color:#000;"><span id="t46" style="transform:scaleX(0.8708);">0</span></div>
<div class="t" style="left:279.8px;top:518px;font-size:13px;color:#000;"><span id="t47" style="transform:scaleX(1.0428);">Категории сообщений:</span></div>
<div class="t" style="left:433.3px;top:520px;font-size:17px;color:#000;"><span id="t48" style="transform:scaleX(0.9358);">*</span></div>
<div class="t" style="left:279.8px;top:544px;font-size:13px;color:#000;"><span id="t49" style="transform:scaleX(0.9683);">Запускать:</span></div>
<div class="t" style="left:279.8px;top:570px;font-size:13px;color:#000;"><span id="t50" style="transform:scaleX(1.0033);">Размер архива (часов):</span></div>
<div class="t" style="left:431.9px;top:571px;font-size:13px;color:#000;"><span id="t51" style="transform:scaleX(0.9676);">72</span></div>
<div class="t" style="left:982.6px;top:706px;font-size:17px;color:#000;"><span id="t52" style="transform:scaleX(1.0415);">*</span></div>
<div class="t" style="left:996.0px;top:705px;font-size:13px;color:#f00;"><span id="t53" style="transform:scaleX(1.1158);">root</span></div>
</body></html>
